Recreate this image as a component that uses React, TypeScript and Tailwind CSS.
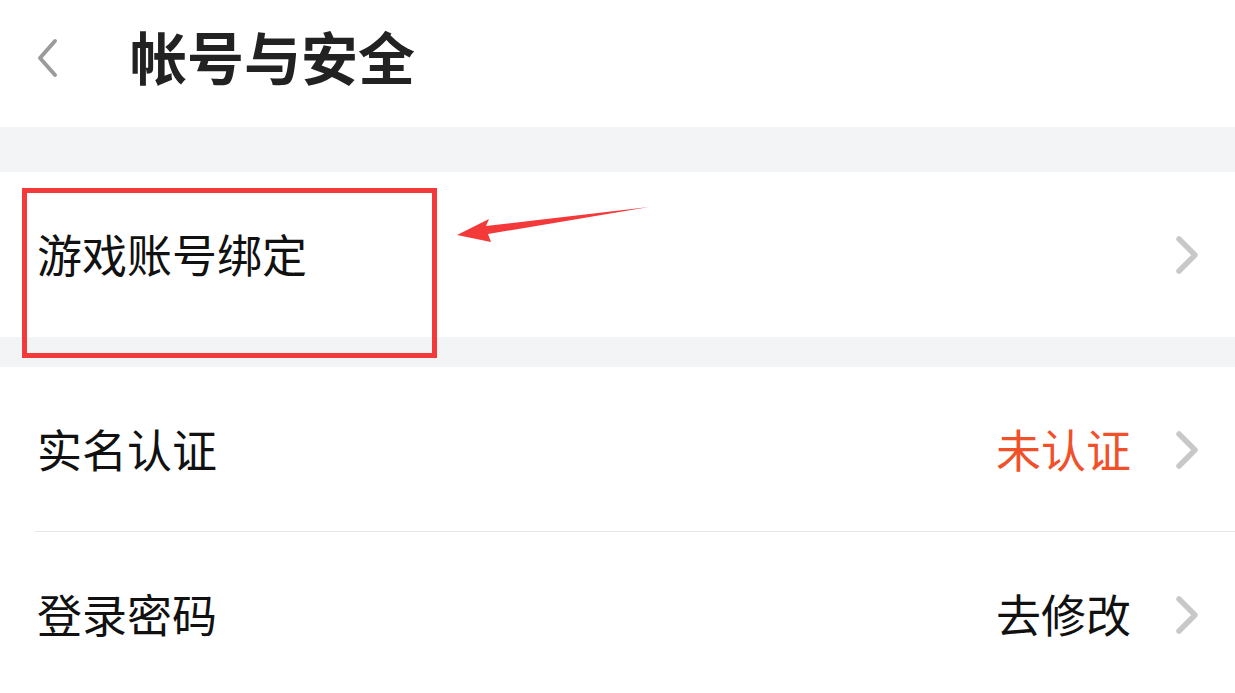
import React from 'react';

const ChevronRight = () => (
  <svg width="26" height="40" viewBox="0 0 26 40" fill="none" className="shrink-0">
    <path d="M5 4 L21 20 L5 36" stroke="#c8c8c8" strokeWidth="5.5" strokeLinecap="round" strokeLinejoin="round" />
  </svg>
);

interface RowProps {
  label: string;
  value?: string;
  valueClass?: string;
  divider?: boolean;
  height: string;
}

const Row: React.FC<RowProps> = ({ label, value, valueClass, divider, height }) => (
  <div className={`relative bg-white ${height}`}>
    <div className="flex h-full items-center pl-[37px] pr-[35px]">
      <span className="flex-1 text-[45px] leading-none text-[#111] -mt-[3px]">{label}</span>
      {value && <span className={`mr-[43px] text-[45px] leading-none -mt-[3px] ${valueClass}`}>{value}</span>}
      <ChevronRight />
    </div>
    {divider && <div className="absolute bottom-0 left-[35px] right-0 h-px bg-[#e6e6e6]" />}
  </div>
);

export default function App() {
  return (
    <div
      className="relative h-[693px] w-[1235px] overflow-hidden bg-white"
      style={{ fontFamily: '"Noto Sans CJK SC", "Noto Sans", sans-serif' }}
    >
      <header className="flex h-[127px] items-center pb-[12px]">
        <div className="flex w-[130px] items-center pl-[35px]">
          <svg width="24" height="40" viewBox="0 0 24 40" fill="none">
            <path d="M20 3 L5 20 L20 37" stroke="#9b9b9b" strokeWidth="4" strokeLinecap="round" strokeLinejoin="round" />
          </svg>
        </div>
        <h1 className="text-[57px] font-bold leading-none text-[#222] -mt-[4px]">帐号与安全</h1>
      </header>

      <div className="h-[45px] bg-[#f2f4f5]" />
      <Row label="游戏账号绑定" height="h-[165px]" />
      <div className="h-[30px] bg-[#f2f4f5]" />
      <Row label="实名认证" value="未认证" valueClass="text-[#f0502a]" divider height="h-[165px]" />
      <Row label="登录密码" value="去修改" valueClass="text-[#111]" height="h-[166px]" />

      {/* annotation overlay */}
      <div className="pointer-events-none absolute left-[22px] top-[188px] h-[170px] w-[415px] border-[5px] border-[#f4393b]" />
      <svg className="pointer-events-none absolute left-0 top-0" width="1235" height="693">
        <polygon points="649,207 486,226 489,219 457,235 491,242 488,234" fill="#f4393b" />
      </svg>
    </div>
  );
}
